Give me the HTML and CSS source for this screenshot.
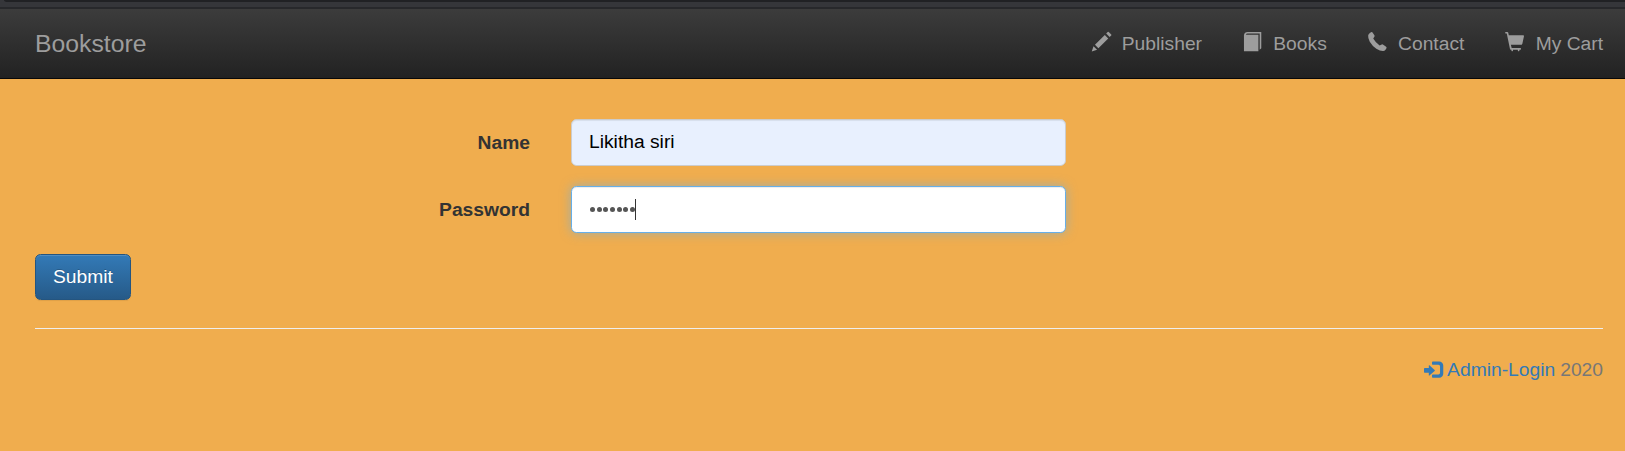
FILE: index.html
```html
<!DOCTYPE html>
<html lang="en">
<head>
<meta charset="utf-8">
<title>Bookstore</title>
<link rel="stylesheet" href="styles.css">
</head>
<body>
<div class="chrome"><div class="chrome-bar"></div></div>
<nav class="navbar">
  <a class="brand">Bookstore</a>
  <div class="nav">
    <a><svg class="icon" viewBox="0 0 1200 1200"><g transform="matrix(1 0 0 -1 0 1200)"><path d="M1011 1210q19 0 33 -13l153 -153q13 -14 13 -33t-13 -33l-99 -92l-214 214l95 96q13 14 32 14zM1013 800l-615 -614l-214 214l614 614zM317 96l-333 -112l110 335z"/></g></svg><span>Publisher</span></a>
    <a><svg class="icon" viewBox="0 0 1200 1200"><path d="M60 190Q90 0 290 0H1140V1010L1040 1110V100H290Q200 100 180 165H960V1200H60Z"/></svg><span>Books</span></a>
    <a><svg class="icon" viewBox="0 0 1200 1200"><g transform="matrix(1 0 0 -1 0 1200)"><path d="M182 1190q48 30 88 -10l120 -160q40 -50 10 -110l-75 -115q110 -210 400 -430l130 60q50 20 95 -15l180 -130q50 -40 20 -90l-60 -90q-60 -80 -150 -90q-180 -5 -420 150q-260 170 -410 430q-120 220 -100 390q10 80 72 130z"/></g></svg><span>Contact</span></a>
    <a><svg class="icon" viewBox="0 0 1200 1200"><g transform="matrix(1 0 0 -1 0 1200)"><path d="M56 1200h94q17 0 31 -11t18 -27l38 -162h896q24 0 39 -18.500t10 -42.500l-100 -475q-5 -21 -27 -42.500t-55 -21.500h-633l48 -200h535q21 0 35.500 -14.500t14.500 -35.500t-14.500 -35.500t-35.500 -14.500h-50v-50q0 -21 -14.500 -35.500t-35.500 -14.500t-35.500 14.500t-14.500 35.500v50h-300v-50q0 -21 -14.500 -35.500t-35.500 -14.500t-35.500 14.500t-14.500 35.500v50h-31q-18 0 -32.500 10t-20.500 19l-5 10l-201 961h-54q-20 0 -35 14.500t-15 35.500t15 35.500t35 14.500z"/></g></svg><span>My Cart</span></a>
  </div>
</nav>
<main class="container">
  <form class="form">
    <div class="row"><label>Name</label><div class="control filled">Likitha siri</div></div>
    <div class="row"><label>Password</label><div class="control focus"><span class="dots"><i></i><i></i><i></i><i></i><i></i><i></i><i></i></span><span class="caret"></span></div></div>
    <button class="btn" type="button">Submit</button>
  </form>
  <hr>
  <footer><a><svg class="icon" viewBox="0 0 1200 1200"><g transform="matrix(1 0 0 -1 0 1200)"><path d="M550 1100h400q103 0 176.500 -73.500t73.500 -176.500v-500q0 -103 -73.500 -176.500t-176.500 -73.500h-400q-21 0 -35.500 14.500t-14.500 35.500v100q0 21 14.500 35.500t35.500 14.500h350q41 0 70.500 29.500t29.500 70.500v400q0 41 -29.500 70.500t-70.500 29.500h-350q-21 0 -35.500 14.500t-14.500 35.500v100q0 21 14.500 35.500t35.500 14.500zM338 867l324 -284q16 -14 16 -33t-16 -33l-324 -284q-16 -14 -27 -9t-11 26v150h-250q-21 0 -35.500 14.500t-14.500 35.500v200q0 21 14.500 35.500t35.500 14.500h250v150q0 21 11 26t27 -9z"/></g></svg><span>Admin-Login</span></a><span class="year">2020</span></footer>
</main>
</body>
</html>
```
FILE: styles.css
```css
* { box-sizing: border-box; }
body { margin: 0; height: 451px; overflow: hidden; background: #f0ad4e; font: 19.25px/27.5px "Liberation Sans", Arial, sans-serif; color: #333; }
.chrome { height: 9px; background: #35363a; border-bottom: 2px solid #27282b; }
.chrome-bar { height: 2px; margin-left: 4px; background: #202124; border-bottom-left-radius: 4px 2px; }
.navbar { height: 70px; display: flex; justify-content: space-between; align-items: center; padding: 0 22px 0 35px; background: linear-gradient(#3c3c3c, #222); border-bottom: 1px solid #080808; color: #9d9d9d; }
.brand { font-size: 24.75px; }
.nav { display: flex; gap: 41px; }
.nav a { display: flex; align-items: center; gap: 11px; }
.icon { display: block; width: 19.25px; height: 19.25px; fill: currentColor; overflow: visible; }
.nav .icon { margin-bottom: 4px; }
.container { padding: 40px 22px 0 35px; }
.row { display: flex; margin-bottom: 20px; }
label { width: 495px; padding-top: 10px; text-align: right; font-weight: bold; }
.control { display: flex; align-items: center; width: 495px; height: 47px; margin-left: 41px; padding: 0 17px; border: 1px solid #ccc; border-radius: 5.5px; box-shadow: inset 0 1px 1px rgba(0,0,0,.075); }
.filled { background: #e8f0fe; color: #000; padding-bottom: 2px; }
.focus { background: #fff; border-color: #66afe9; box-shadow: inset 0 1px 1px rgba(0,0,0,.075), 0 0 11px rgba(102,175,233,.6); }
.dots { display: flex; gap: 1.7px; padding-left: 1px; }
.dots i { width: 5px; height: 5px; border-radius: 50%; background: #555; }
.caret { width: 1px; height: 21px; background: #333; }
.btn { display: block; width: 96px; height: 46px; margin-top: 21px; padding: 0; border: 1px solid #245580; border-radius: 5.5px; background: linear-gradient(#337ab7, #265a88); box-shadow: inset 0 1px 0 rgba(255,255,255,.15), 0 1px 1px rgba(0,0,0,.075); color: #fff; font: inherit; text-shadow: 0 -1px 0 rgba(0,0,0,.2); }
hr { height: 1px; margin: 28px 0 27px; border: 0; background: #eee; }
footer { display: flex; justify-content: flex-end; gap: 5px; }
footer a { display: flex; align-items: center; gap: 4px; color: #337ab7; }
.year { color: #777; }
```
